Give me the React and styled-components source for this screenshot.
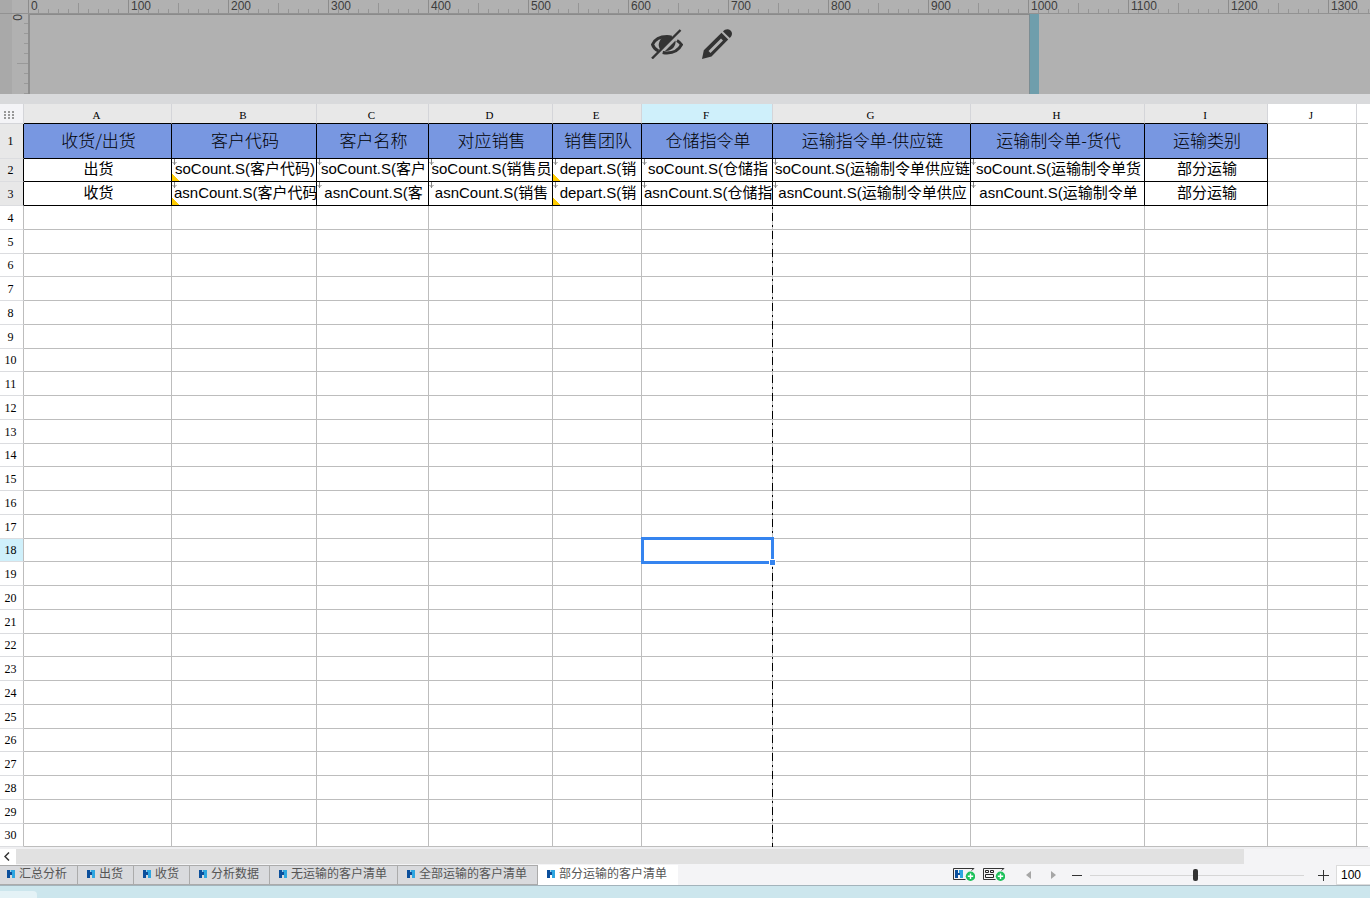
import React, { useState } from 'react'
import styled, { createGlobalStyle } from 'styled-components'

const columns = [
  { id: 'A', width: 148 },
  { id: 'B', width: 145 },
  { id: 'C', width: 112 },
  { id: 'D', width: 124 },
  { id: 'E', width: 89 },
  { id: 'F', width: 131 },
  { id: 'G', width: 198 },
  { id: 'H', width: 174 },
  { id: 'I', width: 123 },
  { id: 'J', width: 89 },
]

const titles = ['收货/出货', '客户代码', '客户名称', '对应销售', '销售团队', '仓储指令单', '运输指令单-供应链', '运输制令单-货代', '运输类别']

const records = [
  ['出货', 'soCount.S(客户代码)', 'soCount.S(客户', 'soCount.S(销售员', 'depart.S(销', 'soCount.S(仓储指', 'soCount.S(运输制令单供应链', 'soCount.S(运输制令单货', '部分运输'],
  ['收货', 'asnCount.S(客户代码', 'asnCount.S(客', 'asnCount.S(销售', 'depart.S(销', 'asnCount.S(仓储指', 'asnCount.S(运输制令单供应', 'asnCount.S(运输制令单', '部分运输'],
]

const sheets = ['汇总分析', '出货', '收货', '分析数据', '无运输的客户清单', '全部运输的客户清单', '部分运输的客户清单']

const marks = Array.from({ length: 14 }, (_, i) => i * 100)
const emptyRows = Array.from({ length: 27 }, (_, i) => i + 4)

const SheetIcon = () => (
  <svg width="8" height="8" viewBox="0 0 8 8" aria-hidden="true">
    <path d="M0 0h3v2h2v3H3v3H0z" fill="#0b4f9c" />
    <path d="M4 0h4v8H5V2H4z" fill="#2ea6e0" />
    <path d="M3 0h1v2H3z" fill="#9fcbe8" />
  </svg>
)

const HiddenIcon = () => (
  <svg width="32" height="30" viewBox="0 0 32 30" fill="none" aria-hidden="true">
    <path d="M7.4 22C4.6 20.6 2.4 18.4 1.5 15.500C4 10 9.500 7.500 16 7.500c1.700 0 3.200.2 4.700.6M26 11.500c2 1.200 3.500 2.600 4.500 4.200-2.600 5.200-8 8.300-14.500 8.300-1.500 0-3-.2-4.300-.5" stroke="#333" strokeWidth="3" />
    <path d="M9.500 21A8.500 8.500 0 0 1 8.500 12.500c1.500-3.600 4-5.500 8-5.500 2 0 3.600.6 5.200 1.800zM14 22L24.500 11.500c.8 5.300-3.600 11-10.500 10.500z" fill="#333" />
    <path d="M1 29.500L29.500 1" stroke="#333" strokeWidth="2.400" />
  </svg>
)

const PencilIcon = () => (
  <svg width="30" height="30" viewBox="0 0 30 30" aria-hidden="true">
    <path fillRule="evenodd" d="M19.500 3.800L26.200 10.500 9.500 27.500 0 30 1.800 21.300zM19 9.500L6.500 22 8.500 24 21 11.500z" fill="#333" />
    <path d="M21 2.400C23-.2 26.300-.6 28.500 1.400c2.200 2.200 1.900 5.500-.8 7.500z" fill="#333" />
  </svg>
)

const AddBadge = () => (
  <g>
    <circle cx="17.500" cy="8.300" r="4.700" fill="#1dc15a" />
    <path d="M14.800 8.300h5.400M17.500 5.600v5.400" stroke="#fff" strokeWidth="1.400" />
  </g>
)

const AddSheetIcon = () => (
  <svg width="22" height="13" viewBox="0 0 22 13" aria-hidden="true">
    <path d="M21 .5H.5v11h12" fill="none" stroke="#333" />
    <path d="M21.500 0l-3 2.500" stroke="#444" />
    <path d="M2 2h3v3h2v2H5v3H2z" fill="#0b4f9c" />
    <path d="M6 2h4v8H7V5H6z" fill="#2ea6e0" />
    <AddBadge />
  </svg>
)

const AddFormIcon = () => (
  <svg width="22" height="13" viewBox="0 0 22 13" aria-hidden="true">
    <path d="M21 .5H.5v11h12" fill="none" stroke="#333" />
    <path d="M21.500 0l-3 2.500" stroke="#444" />
    <path d="M2.500 2.500h3v2h-3zM7.500 2.500h3v2h-3zM2.500 6.500h8v3h-8z" fill="none" stroke="#222" />
    <AddBadge />
  </svg>
)

const FormulaMark = () => (
  <Mark width="5" height="7" viewBox="0 0 5 7" aria-hidden="true">
    <path d="M2.500 0v6M.5 3l2 2 2-2" fill="none" stroke="#858585" />
  </Mark>
)

const App = () => {
  const [active, setActive] = useState(6)
  const [zoom, setZoom] = useState(100)

  return (
    <Page>
      <GlobalStyle />
      <Designer>
        <TopRuler>
          {marks.map(mark => <RulerLabel key={mark}>{mark}</RulerLabel>)}
        </TopRuler>
        <Stage>
          <Edge />
          <SideRuler><span>0</span></SideRuler>
          <Canvas>
            <Tools>
              <ToolButton aria-label="隐藏"><HiddenIcon /></ToolButton>
              <ToolButton aria-label="编辑"><PencilIcon /></ToolButton>
            </Tools>
            <ResizeBar />
          </Canvas>
        </Stage>
      </Designer>

      <SheetArea>
        <Sheet>
          <colgroup>
            <Col $width={24} />
            {columns.map(c => <Col key={c.id} $width={c.width} />)}
            <col />
          </colgroup>
          <thead>
            <Row $height={20}>
              <Corner>
                <svg width="10" height="8" viewBox="0 0 10 8" aria-hidden="true">
                  <path d="M0 1h10M0 4h10M0 7h10" stroke="#999" strokeWidth="2" strokeDasharray="2 2" />
                </svg>
              </Corner>
              {columns.map((c, i) => (
                <ColumnHead key={c.id} scope="col" $plain={i === 9} $active={i === 5}>{c.id}</ColumnHead>
              ))}
              <ColumnHead $plain $last />
            </Row>
          </thead>
          <tbody>
            <Row $height={35}>
              <RowHead scope="row" $used>1</RowHead>
              {titles.map(t => <TitleCell key={t}>{t}</TitleCell>)}
              <Cell /><Cell $last />
            </Row>
            {records.map((record, r) => (
              <Row key={r} $height={23 + r}>
                <RowHead scope="row" $used>{r + 2}</RowHead>
                {record.map((text, i) => (
                  <DataCell key={i} $flag={i === 1 || i === 4}>
                    {i > 0 && i < 8 && <FormulaMark />}
                    {text}
                  </DataCell>
                ))}
                <Cell /><Cell $last />
              </Row>
            ))}
            {emptyRows.map(n => (
              <Row key={n} $height={n % 4 === 2 ? 23 : 24}>
                <RowHead scope="row" $active={n === 18}>{n}</RowHead>
                {columns.map((c, i) => (
                  <Cell key={c.id}>{n === 18 && i === 5 && <Selection />}</Cell>
                ))}
                <Cell $last />
              </Row>
            ))}
          </tbody>
        </Sheet>
        <PageBreak />
      </SheetArea>

      <Scroller>
        <ScrollButton aria-label="向左">
          <svg width="6" height="9" viewBox="0 0 6 9"><path d="M5 .5l-4 4 4 4" fill="none" stroke="#333" strokeWidth="1.500" /></svg>
        </ScrollButton>
        <ScrollThumb />
      </Scroller>

      <Footer>
        <Tabs>
          {sheets.map((name, i) => (
            <Tab key={name} $active={i === active} onClick={() => setActive(i)}>
              <SheetIcon />
              {name}
            </Tab>
          ))}
        </Tabs>
        <Controls>
          <IconButton aria-label="新增报表"><AddSheetIcon /></IconButton>
          <IconButton aria-label="新增表单"><AddFormIcon /></IconButton>
          <Pager>
            <StepButton aria-label="上一页">
              <svg width="5" height="8" viewBox="0 0 5 8"><path d="M5 0v8L0 4z" fill="#a6a6a6" /></svg>
            </StepButton>
            <StepButton aria-label="下一页">
              <svg width="5" height="8" viewBox="0 0 5 8"><path d="M0 0v8l5-4z" fill="#a6a6a6" /></svg>
            </StepButton>
          </Pager>
          <StepButton aria-label="缩小">
            <svg width="10" height="10" viewBox="0 0 10 10"><path d="M0 5.500h10" stroke="#333" /></svg>
          </StepButton>
          <Slider type="range" min="10" max="193" value={zoom} aria-label="缩放" onChange={e => setZoom(e.target.value)} />
          <StepButton aria-label="放大">
            <svg width="11" height="11" viewBox="0 0 11 11"><path d="M0 5.500h11M5.500 0v11" stroke="#333" /></svg>
          </StepButton>
          <ZoomInput value={zoom} aria-label="缩放比例" onChange={e => setZoom(e.target.value)} />
        </Controls>
      </Footer>
      <Desktop><Dock /></Desktop>
    </Page>
  )
}

export default App

const GlobalStyle = createGlobalStyle`
*, *::after {
  box-sizing: border-box;
}
body {
  margin: 0;
  background: #cce6ed;
  font-family: "Liberation Sans", "Noto Sans CJK SC", sans-serif;
}
button {
  padding: 0;
  border: 0;
  background: none;
  font: inherit;
}
svg {
  display: block;
}
`

const Page = styled.div`
display: flex;
flex-direction: column;
min-height: 100vh;
overflow: hidden;
`
const Designer = styled.div`
background: #b1b1b1;
border-bottom: 10px solid #d9dadc;
`
const TopRuler = styled.div`
display: flex;
height: 14px;
padding-left: 28px;
border-bottom: 1px solid #929292;
background:
  linear-gradient(90deg, #a9a9a9 12px, transparent 12px) 0 0 / 28px 13px no-repeat,
  repeating-linear-gradient(90deg, #959595 0 1px, transparent 1px 10px) 28px 9px / 100% 4px no-repeat,
  repeating-linear-gradient(90deg, #959595 0 1px, transparent 1px 50px) 28px 3px / 100% 10px no-repeat;
`
const RulerLabel = styled.span`
flex: 0 0 100px;
padding-left: 2px;
border-left: 1px solid #8c8c8c;
color: #3c3c3c;
font-size: 12px;
line-height: 13px;
`
const Stage = styled.div`
display: flex;
height: 80px;
`
const Edge = styled.div`
width: 12px;
background: #a9a9a9;
`
const SideRuler = styled.div`
width: 18px;
border-right: 2px solid #8e8e8e;
color: #3c3c3c;
font-size: 12px;
line-height: 13px;
background:
  repeating-linear-gradient(180deg, transparent 0 9px, #999 9px 10px) 12px 0 / 4px 100% no-repeat,
  linear-gradient(#999, #999) 5px 49px / 11px 1px no-repeat;
span {
  display: block;
  writing-mode: vertical-rl;
  transform: rotate(180deg);
  width: 13px;
}
`
const Canvas = styled.div`
flex: 1;
display: flex;
`
const Tools = styled.div`
display: flex;
justify-content: center;
align-items: flex-start;
gap: 20px;
flex: 0 1 999px;
padding: 14px 0 0 324px;
border-top: 1px solid #8a8a8a;
`
const ToolButton = styled.button`
cursor: pointer;
&:first-child {
  margin-right: -1px;
}
`
const ResizeBar = styled.div`
width: 10px;
background: #6f9eac;
border-left: 1px solid #7c8d93;
`
const SheetArea = styled.div`
position: relative;
overflow: hidden;
background: #fff;
padding-right: 2px;
border-bottom: 2px solid #f0f0f2;
`
const Sheet = styled.table`
width: 100%;
table-layout: fixed;
border-collapse: separate;
border-spacing: 0;
text-align: center;
td, th {
  overflow: hidden;
  white-space: nowrap;
}
`
const Col = styled.col`
width: ${props => props.$width}px;
`
const Row = styled.tr`
height: ${props => props.$height}px;
`
const Corner = styled.th`
padding: 3px 0 0 4px;
background: #f4f4f7;
border-right: 1px solid #d4d5d9;
border-bottom: 1px solid #d4d5d9;
`
const ColumnHead = styled.th`
padding: 2px 2px 0 0;
background: ${props => props.$active ? '#cff0fb' : props.$plain ? '#fff' : '#e8e8e8'};
border-right: ${props => props.$last ? '0' : '1px solid #d4d5d9'};
border-bottom: 1px solid ${props => props.$plain ? '#bdbdbd' : '#000'};
font-family: "Liberation Serif", serif;
font-size: 11px;
font-weight: 400;
line-height: 14px;
`
const RowHead = styled.th`
padding: 0 2px 0 0;
background: ${props => props.$active ? '#cff0fb' : props.$used ? '#e8e8e8' : '#fff'};
border-right: 1px solid ${props => props.$used ? '#000' : '#bdbdbd'};
border-bottom: 1px solid #dcdde0;
font-family: "Liberation Serif", serif;
font-size: 12px;
font-weight: 400;
line-height: 14px;
`
const Cell = styled.td`
position: relative;
padding: 0;
border-right: ${props => props.$last ? '0' : '1px solid #bdbdbd'};
border-bottom: 1px solid #bdbdbd;
&& {
  overflow: visible;
}
`
const TitleCell = styled.td`
padding: 0 0 2px 2px;
background: #7897e1;
border-right: 1px solid #000;
border-bottom: 1px solid #000;
font-family: "Noto Sans CJK SC", sans-serif;
font-size: 17px;
font-weight: 300;
line-height: 24px;
`
const DataCell = styled.td`
position: relative;
padding: 0 0 2px 2px;
border-right: 1px solid #000;
border-bottom: 1px solid #000;
font-size: 15px;
line-height: 20px;
background: ${props => props.$flag ? 'linear-gradient(45deg, #fc0 5px, transparent 5px)' : '#fff'};
`
const Mark = styled.svg`
position: absolute;
top: 0;
left: 0;
`
const Selection = styled.div`
position: absolute;
z-index: 2;
top: -2px;
left: -1px;
right: -2px;
bottom: -3px;
border: 3px solid #3584ef;
&::after {
  content: "";
  position: absolute;
  right: -5px;
  bottom: -5px;
  width: 7px;
  height: 7px;
  background: #3584ef;
  border: 1px solid #fff;
}
`
const PageBreak = styled.div`
position: absolute;
top: 102px;
bottom: 0;
left: 772px;
width: 1px;
background: linear-gradient(180deg, #000 0 8px, transparent 8px 12px, #000 12px 14px, transparent 14px) 0 7px / 1px 18px;
`
const Scroller = styled.div`
display: flex;
height: 16px;
padding-right: 126px;
background: #f4f4f6;
`
const ScrollButton = styled.button`
display: flex;
align-items: center;
width: 16px;
padding: 0 0 2px 4px;
background: #fff;
`
const ScrollThumb = styled.div`
flex: 1;
margin-bottom: 1px;
background: #e1e1e1;
`
const Footer = styled.div`
display: flex;
justify-content: space-between;
height: 21px;
background: #f4f4f6;
border-bottom: 1px solid #a3b3bb;
`
const Tabs = styled.div`
display: flex;
margin-left: -2px;
`
const Tab = styled.button`
display: flex;
align-items: center;
gap: 4px;
padding: 0 11px 3px 9px;
color: #555;
font-size: 12px;
line-height: 16px;
white-space: nowrap;
background: ${props => props.$active ? '#fff' : '#d9dadd'};
box-shadow: ${props => props.$active ? 'none' : 'inset 0 1px #ababab, inset -1px 0 #ababab, inset 0 -1px #ababab'};
`
const Controls = styled.div`
display: flex;
align-items: center;
`
const IconButton = styled.button`
margin: 0 8px 2px 0;
`
const Pager = styled.div`
display: flex;
padding-left: 3px;
margin-right: -2px;
`
const StepButton = styled.button`
display: flex;
justify-content: center;
width: 25px;
`
const Slider = styled.input`
appearance: none;
width: 214px;
height: 13px;
margin: 0 7px 0 1px;
background: linear-gradient(#d6d6d6, #d6d6d6) 0 6px / 100% 1px no-repeat;
&::-webkit-slider-thumb {
  appearance: none;
  width: 5px;
  height: 12px;
  border-radius: 2px;
  background: #333;
}
`
const ZoomInput = styled.input`
width: 34px;
height: 20px;
padding: 0 4px;
border: 1px solid #dcdcdc;
border-right: 0;
background: #fff;
color: #000;
font-family: "Liberation Sans", sans-serif;
font-size: 12px;
`
const Desktop = styled.div`
flex: 1;
min-height: 12px;
padding-top: 5px;
background: #cce6ed;
`
const Dock = styled.div`
width: 37px;
height: 7px;
border-radius: 0 4px 0 0;
background: #e4f2f6;
`
